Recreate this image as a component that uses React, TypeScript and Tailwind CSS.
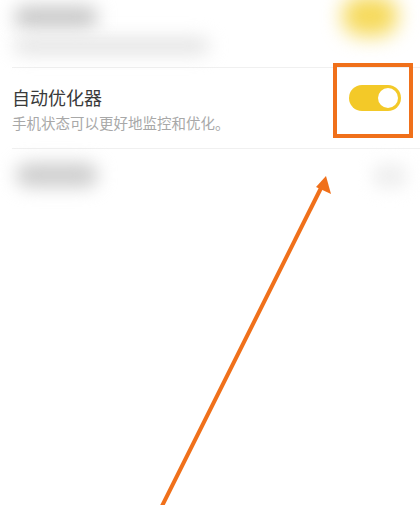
import { useState } from "react";

function Toggle({ on, onChange }: { on: boolean; onChange: () => void }) {
	return (
		<button
			type="button"
			onClick={onChange}
			className={`flex h-[26px] w-[52px] items-center rounded-full px-[3px] ${on ? "justify-end bg-[#f3c928]" : "justify-start bg-[#dddddd]"}`}
		>
			<span className="h-[20px] w-[20px] rounded-full bg-white" />
		</button>
	);
}

export default function App() {
	const [on, setOn] = useState(true);

	return (
		<div
			className="relative h-[505px] w-[420px] overflow-hidden bg-white"
			style={{ fontFamily: '"Noto Sans CJK SC", "Noto Sans", sans-serif' }}
		>
			{/* blurred row above */}
			<div className="flex h-[67px] justify-between pl-[14px] pr-[22px]">
				<div className="flex flex-col gap-[10px] pt-[6px]">
					<div className="h-[22px] w-[84px] rounded-full bg-[#c8c8c8] blur-[9px]" />
					<div className="h-[16px] w-[195px] rounded-full bg-[#e2e2e2] blur-[9px]" />
				</div>
				<div className="mt-[-4px] h-[40px] w-[56px] rounded-full bg-[#f6da5c] blur-[10px]" />
			</div>

			<div className="ml-3 border-t border-[#f0f0f0]" />

			<div className="relative flex h-[80px] items-start justify-between pl-3 pr-[19px] pt-[17px]">
				<div className="flex flex-col gap-[4px]">
					<span className="text-[18px] leading-[24px] text-[#3a3a3a]">自动优化器</span>
					<span className="text-[14.5px] leading-[20px] text-[#a8a8a8]">手机状态可以更好地监控和优化。</span>
				</div>
				<Toggle on={on} onChange={() => setOn(!on)} />
				<div className="pointer-events-none absolute left-[333px] top-[-5px] h-[75px] w-[80px] border-[4px] border-[#f0701a]" />
			</div>

			<div className="ml-3 border-t border-[#f0f0f0]" />

			{/* blurred row below */}
			<div className="flex h-[60px] items-start justify-between pl-[16px] pr-[12px] pt-[14px]">
				<div className="h-[24px] w-[82px] rounded-full bg-[#cdcdcd] blur-[9px]" />
				<div className="h-[26px] w-[36px] rounded-full bg-[#f0f0f0] blur-[8px]" />
			</div>

			<svg className="pointer-events-none absolute left-0 top-0" width="420" height="505" viewBox="0 0 420 505">
				<line x1="160" y1="510" x2="321" y2="188" stroke="#f0701a" strokeWidth="4" />
				<polygon points="326,176 331,194 316,187" fill="#f0701a" />
			</svg>
		</div>
	);
}
